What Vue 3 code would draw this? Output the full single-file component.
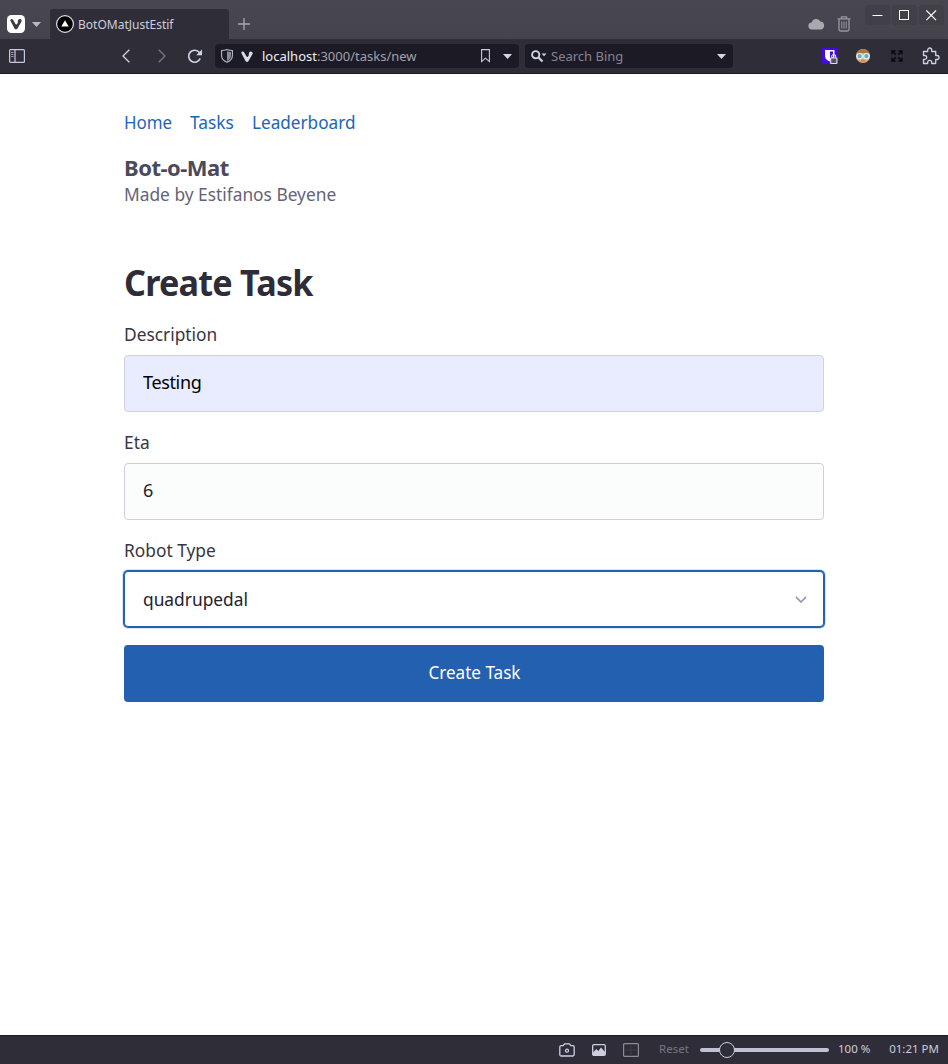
<script setup>
import { ref } from 'vue'

const links = [
  { label: 'Home', cls: 'home' },
  { label: 'Tasks', cls: 'tasks' },
  { label: 'Leaderboard', cls: 'leaders' },
]
const description = ref('Testing')
const eta = ref('6')
</script>

<template>
  <div class="window">
    <header class="tabs">
      <svg class="logo" width="18" height="18" viewBox="0 0 18 18"><rect width="18" height="18" rx="4.5" fill="#fff" /><path d="M3.300 5.600Q3.200 4 4.700 4q1 0 1.500 1l2 3.500q1.300 2 2.200.1.600-1.100.4-2.300Q10.900 4 12.900 4q2.300.3 1.600 2.600l-4 6.900q-1.500 1.900-3 0z" fill="#3d3b46" /></svg>
      <svg class="caret" width="9" height="5" viewBox="0 0 9 5"><path d="M0 0h9L4.5 5z" fill="#bbb9c1" /></svg>
      <div class="tab">
        <svg width="18" height="18" viewBox="0 0 18 18"><circle cx="9" cy="9" r="8.4" fill="#000" stroke="#dedee2" stroke-width="1.2" /><path d="M9 5.300l3.700 6.200H5.300z" fill="#fff" /></svg>
        <span>BotOMatJustEstif</span>
      </div>
      <svg class="plus" width="12" height="12" viewBox="0 0 12 12"><path d="M6 0v12M0 6h12" stroke="#aaa8af" stroke-width="1.3" /></svg>
      <span class="grow"></span>
      <svg class="cloud" width="17" height="12" viewBox="0 0 17 12"><path d="M4 11.4a3.5 3.5 0 0 1-.2-7A4.6 4.6 0 0 1 12.4 3.500a4 4 0 0 1 .6 7.900z" fill="#aaa8ae" /></svg>
      <svg class="trash" width="14" height="16" viewBox="0 0 14 16" fill="none" stroke="#99979e" stroke-width="1.3"><path d="M.5 2.800h13M4.500 2.500V.8h5v1.700M2 3v10.500q0 1.500 1.500 1.500h7q1.500 0 1.500-1.500V3" /><path d="M4.800 5.500v7M7 5.500v7M9.200 5.500v7" stroke-width="1" /></svg>
      <div class="controls">
        <button><svg width="11" height="11" viewBox="0 0 11 11"><path d="M.5 5.500h10" stroke="#fff" /></svg></button>
        <button><svg width="11" height="11" viewBox="0 0 11 11"><rect x=".5" y=".5" width="9" height="9" fill="none" stroke="#fff" /></svg></button>
        <button><svg width="11" height="11" viewBox="0 0 11 11"><path d="M.4.5l9.600 9.600m0-9.600L.4 10.100" stroke="#fff" stroke-width="1.100" /></svg></button>
      </div>
    </header>

    <div class="toolbar">
      <svg class="panel" width="16" height="14" viewBox="0 0 16 14" fill="none" stroke="#c5c9df" stroke-width="1.200"><rect x=".6" y=".6" width="14.800" height="12.800" rx="1" /><path d="M6 .6v12.800" /><path d="M2 3.500h2.500M2 5.500h2.500M2 7.500h2.500" stroke-width="1" opacity=".7" /></svg>
      <svg class="back" width="8" height="14" viewBox="0 0 8 14"><path d="M7.300.7L1 7l6.300 6.300" fill="none" stroke="#d3d6e5" stroke-width="1.300" /></svg>
      <svg class="forward" width="8" height="14" viewBox="0 0 8 14"><path d="M.7.7L7 7 .7 13.300" fill="none" stroke="#797884" stroke-width="1.300" /></svg>
      <svg class="reload" width="16" height="15" viewBox="0 0 16 15"><path d="M13.200 9.500a6 6 0 1 1-.8-6" fill="none" stroke="#d3d6e5" stroke-width="1.600" /><path d="M15 .5v5.800H9.200z" fill="#d3d6e5" /></svg>

      <div class="address">
        <svg width="12" height="14" viewBox="0 0 12 14"><path d="M.6 1.500Q3.500 1.500 6 .6q2.500.9 5.400.9v5.300q0 4.300-5.400 6.500Q.6 11.100.6 6.800z" fill="none" stroke="#b9bbca" stroke-width="1.100" /><path d="M6 2.200q1.900.7 4 .8v4q0 3-4 4.900z" fill="#8a8b98" /></svg>
        <svg class="vmark" width="12" height="11" viewBox="3 3.500 12 11"><path d="M3.300 5.600Q3.200 4 4.700 4q1 0 1.500 1l2 3.500q1.300 2 2.200.1.600-1.100.4-2.300Q10.900 4 12.900 4q2.300.3 1.600 2.600l-4 6.900q-1.500 1.900-3 0z" fill="#d9dcec" /></svg>
        <span class="url"><b>localhost</b>:3000/tasks/new</span>
        <svg class="bookmark" width="9" height="14" viewBox="0 0 9 14"><path d="M.6.6h7.800v12L4.500 9.200.6 12.600z" fill="none" stroke="#c9ccdd" stroke-width="1.100" /></svg>
        <svg width="9" height="5" viewBox="0 0 9 5"><path d="M0 0h9L4.500 5z" fill="#d3d6e5" /></svg>
      </div>
      <div class="search">
        <svg width="16" height="13" viewBox="0 0 16 13"><circle cx="4.700" cy="4.700" r="3.600" fill="none" stroke="#cfd2e1" stroke-width="1.900" /><path d="M7.500 7.500l4 4" stroke="#cfd2e1" stroke-width="2.300" /><path d="M10.500 3.500h5L13 6.200z" fill="#cfd2e1" /></svg>
        <span>Search Bing</span>
        <svg width="9" height="5" viewBox="0 0 9 5"><path d="M0 0h9L4.500 5z" fill="#d3d6e5" /></svg>
      </div>
      <span class="grow"></span>
      <svg class="guard" width="16" height="16" viewBox="0 0 16 16"><rect width="16" height="16" fill="#4307e8" /><path d="M3 2h9.500v6q0 3.500-4.700 5.500Q3 11.500 3 8z" fill="#fff" /><path d="M8 3.500h3v4.800q0 1.500-3 3z" fill="#4307e8" /><path d="M9.700 10V8.500a2 2 0 0 1 4 0V10" fill="none" stroke="#d8dbe7" stroke-width="1.200" /><rect x="8" y="9.500" width="7.500" height="6.500" rx="1" fill="#d8dbe7" /><rect x="9.200" y="10.500" width="5.100" height="4.500" fill="#55545e" /></svg>
      <svg class="face" width="16" height="16" viewBox="0 0 16 16"><circle cx="8" cy="8" r="7.100" fill="#dda876" /><path d="M1.300 6A7.100 7.100 0 0 1 14.700 6L8 5z" fill="#a27a48" /><circle cx="4.600" cy="8.200" r="2.700" fill="#6ba9bd" stroke="#e3f1f2" stroke-width="1.200" /><circle cx="11.400" cy="8.200" r="2.700" fill="#6ba9bd" stroke="#e3f1f2" stroke-width="1.200" /><path d="M6 12.500q2 1.200 4 0" fill="none" stroke="#c86e52" /></svg>
      <svg class="expand" width="12" height="12" viewBox="0 0 12 12"><path d="M1 4.500V1h3.500M1 1l3.800 3.800M7.500 1H11v3.500M11 1L7.200 4.800M1 7.500V11h3.500M1 11l3.800-3.800M11 7.500V11H7.500M11 11L7.200 7.200" fill="none" stroke="#09090b" stroke-width="1.400" /></svg>
      <svg class="puzzle" width="18" height="18" viewBox="0 0 18 18"><path d="M1.500 4.500h4.200V3a2 2 0 0 1 4 0v1.500h4v4h1.300a2 2 0 0 1 0 4h-1.300v4H9.700v-1.200a2 2 0 0 0-4 0v1.200H1.500v-4h1.200a2 2 0 0 0 0-4H1.500z" fill="none" stroke="#ced1e2" stroke-width="1.300" stroke-linejoin="round" /></svg>
    </div>

    <main>
      <nav><a v-for="link in links" :key="link.label" :class="link.cls">{{ link.label }}</a></nav>
      <div class="brand">
        <h2>Bot-o-Mat</h2>
        <p>Made by Estifanos Beyene</p>
      </div>
      <h1>Create Task</h1>
      <form @submit.prevent>
        <label>Description</label>
        <input v-model="description" class="field filled" />
        <label>Eta</label>
        <input v-model="eta" class="field" />
        <label>Robot Type</label>
        <div class="field select">
          <span>quadrupedal</span>
          <svg width="12" height="7" viewBox="0 0 12 7"><path d="M.9.9L6 6 11.100.9" fill="none" stroke="#9391b0" stroke-width="1.500" /></svg>
        </div>
        <button class="submit"><span>Create Task</span></button>
      </form>
    </main>

    <footer>
      <svg class="camera" width="16" height="14" viewBox="0 0 16 14" fill="none" stroke="#cdd0e2" stroke-width="1.300"><path d="M2.200 2.700h2L5.500.8h5l1.300 1.900h2q1.400 0 1.400 1.400v7.500q0 1.400-1.400 1.400H2.200Q.8 13 .8 11.600V4.100q0-1.400 1.400-1.400z" /><circle cx="8" cy="7.700" r="1.500" /></svg>
      <svg class="image" width="14" height="12" viewBox="0 0 14 12"><rect x=".7" y=".7" width="12.600" height="10.600" rx="1.300" fill="none" stroke="#cdd0e2" stroke-width="1.300" /><path d="M1 11V8.500l3.300-3.600 2 2 2.700-3.400 4 4.500v3z" fill="#cdd0e2" /></svg>
      <svg class="tile" width="16" height="14" viewBox="0 0 16 14"><rect x=".6" y=".6" width="14.800" height="12.800" rx="1" fill="none" stroke="#8c8b97" stroke-width="1.200" /><path d="M8 1v12M1 7h14" stroke="#403e49" /></svg>
      <span class="reset">Reset</span>
      <div class="slider"><i></i></div>
      <span class="percent">100 %</span>
      <span class="clock">01:21 PM</span>
    </footer>
  </div>
</template>

<style>
html, body { margin: 0; background: #fff; }
</style>

<style scoped>
* { box-sizing: border-box; }
svg { display: block; flex: none; }
button, input { font: inherit; border: 0; margin: 0; }
.window { width: 948px; height: 1064px; display: flex; flex-direction: column; font-family: "Noto Sans", "Open Sans", sans-serif; overflow: hidden; }
.grow { flex: 1; }
.tabs { height: 39px; flex: none; display: flex; align-items: center; background: linear-gradient(#48464f, #45434d); padding: 9px 4px 0 7px; }
.caret { margin-left: 7px; }
.tab { width: 179px; height: 30px; margin-left: 9px; display: flex; align-items: center; gap: 4px; padding-left: 6px; border-radius: 3px 3px 0 0; background: #2f2d38; color: #cccede; font-size: 12px; white-space: nowrap; }
.plus { margin-left: 9px; }
.trash { margin-left: 12px; margin-right: 14px; }
.controls { display: flex; gap: 2px; align-self: flex-start; margin-top: -4px; }
.controls button { width: 25px; height: 20px; padding: 0; display: flex; align-items: center; justify-content: center; background: #413f48; border-radius: 4px; }
.toolbar { height: 35px; flex: none; display: flex; align-items: center; background: #2f2d38; border-bottom: 1px solid #1c1a23; padding: 0 8px 0 9px; }
.back { margin-left: 97px; }
.forward { margin-left: 28px; }
.reload { margin-left: 21px; }
.address, .search { height: 24px; flex: none; border-radius: 4px; background: #1c1a24; display: flex; align-items: center; font-size: 13px; white-space: nowrap; }
.address { width: 304px; margin-left: 12px; padding: 0 7px 0 6px; color: #a1a1ae; }
.vmark { margin-left: 8px; }
.url { margin-left: 9px; flex: 1; }
.url b { font-weight: 400; color: #eeeff5; }
.bookmark { margin-right: 13px; }
.search { width: 208px; margin-left: 6px; padding: 0 7px 0 6px; color: #858490; }
.search span { margin-left: 4px; flex: 1; }
.face { margin-left: 17px; }
.expand { margin-left: 20px; }
.puzzle { margin-left: 19px; }
main { flex: 1; width: 700px; margin: 0 auto; padding-top: 35px; font-size: 18px; line-height: 27px; color: #373540; }
nav { display: flex; gap: 18px; color: #1b66b5; height: 27px; }
nav a, .brand p, h1, label, .select span { transform: scaleX(.963); transform-origin: left center; }
nav a.home { width: 48px; transform: scaleX(.94); }
.tasks { width: 44px; }
nav a.leaders { transform: scaleX(.953); }
.brand { margin-top: 17px; }
.brand h2 { margin: 0; font-size: 22px; font-weight: 700; line-height: 28px; color: #4b4a5a; letter-spacing: -.5px; }
.brand p { margin: 0; color: #646377; }
h1 { margin: 52px 0 16px; font-size: 36px; line-height: 45px; font-weight: 700; letter-spacing: -.8px; color: #2d2c38; transform: scaleX(.948); }
form { display: flex; flex-direction: column; }
label { height: 27px; margin-bottom: 7px; }
.field { height: 57px; padding: 0 18px 3px; margin-bottom: 17px; border: 1px solid #cfcfe4; border-radius: 4px; background: #fbfdfc; color: #23222b; outline: none; display: flex; align-items: center; }
.filled { background: #e9ecff; color: #000; letter-spacing: -.35px; }
.select { height: 56px; margin-bottom: 18px; padding: 0 16px 0 18px; background: #fff; justify-content: space-between; border-color: #2460b0; box-shadow: 0 0 0 1px #2460b0, 0 0 0 2px #dce7f3; }
.submit { height: 57px; padding-bottom: 3px; background: #2460b0; color: #fff; border-radius: 4px; }
.submit span { display: inline-block; transform: scaleX(.95); }
footer { height: 29px; flex: none; display: flex; align-items: center; background: #2f2d38; border-top: 1px solid #1c1a23; padding: 0 9px 0 559px; font-size: 11.500px; white-space: nowrap; color: #cccede; }
footer span { padding-bottom: 3px; }
.image { margin-left: 17px; }
.tile { margin-left: 17px; }
.reset { margin-left: 20px; width: 41px; color: #777681; }
.slider { width: 129px; height: 4px; background: #bfc2d5; border-radius: 2px; }
.slider i { display: block; width: 16px; height: 16px; margin: -6px 0 0 19px; border: 1px solid #cccfdd; border-radius: 50%; background: #2f2d38; }
.percent { margin-left: 9px; }
.clock { margin-left: auto; }
</style>
